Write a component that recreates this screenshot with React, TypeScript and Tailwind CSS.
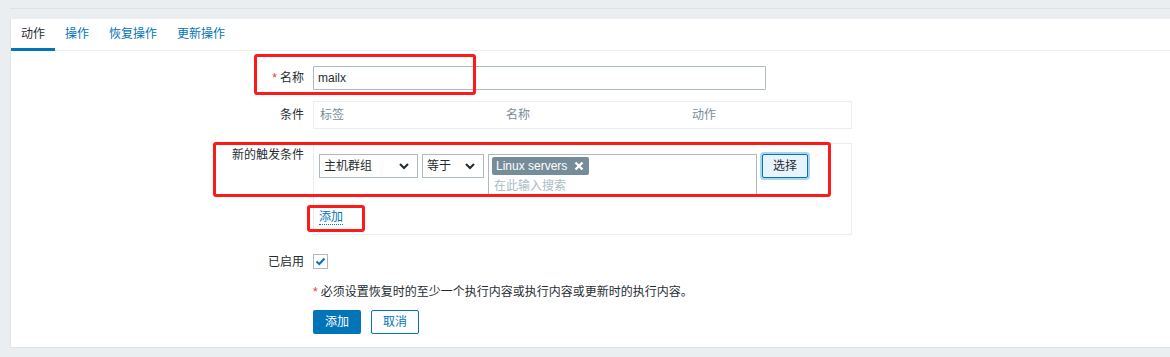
import React from 'react';

const font = "font-['Liberation_Sans','Noto_Sans_CJK_SC',sans-serif]";

/** Small dark chevron used in the native-looking selects. */
function Chevron() {
    return (
        <svg width="10" height="7" viewBox="0 0 10 7" className="shrink-0">
            <polyline points="1,1 5,5 9,1" fill="none" stroke="#1f2c33" strokeWidth="2" />
        </svg>
    );
}

function Select({ label, width }: { label: string; width: string }) {
    return (
        <div className={`${width} h-[24px] flex items-center justify-between pl-[4px] pr-[8px] border border-[#acbbc2] bg-white`}>
            <span>{label}</span>
            <Chevron />
        </div>
    );
}

const tabs = ['动作', '操作', '恢复操作', '更新操作'];

export default function App() {
    return (
        <div className={`relative w-[1170px] h-[357px] overflow-hidden bg-[#ebeef0] text-[12px] leading-[14px] text-[#1f2c33] ${font}`}>
            {/* strip above the panel */}
            <div className="ml-[10px] h-[9px] border-b border-[#dde2e5]" />

            <div className="mt-[10px] ml-[10px] h-[329px] bg-white border-l border-b border-[#dfe3e6]">
                {/* tabs */}
                <div className="flex border-b border-[#ebeef0]">
                    {tabs.map((t, i) => (
                        <div
                            key={t}
                            className={`h-[32px] -mb-px flex items-center px-[10px] border-b-[3px] ${
                                i === 0 ? 'border-[#0275b8] text-[#1f2c33]' : 'border-transparent text-[#0275b8]'
                            }`}
                        >
                            {t}
                        </div>
                    ))}
                </div>

                {/* name */}
                <div className="mt-[15px] flex items-center">
                    <div className="w-[293px] text-right">
                        <span className="text-[#e33734] mr-[3px]">*</span>名称
                    </div>
                    <div className="ml-[9px] w-[453px] h-[24px] flex items-center px-[4px] border border-[#acbbc2] rounded-[1px]">mailx</div>
                </div>

                {/* conditions */}
                <div className="mt-[11px] flex items-center">
                    <div className="w-[293px] text-right">条件</div>
                    <div className="ml-[9px] w-[539px] h-[28px] border border-[#ebeef0] grid grid-cols-[186px_186px_1fr] items-center text-[#768d99]">
                        <span className="pl-[6px]">标签</span>
                        <span className="pl-[6px]">名称</span>
                        <span className="pl-[6px]">动作</span>
                    </div>
                </div>

                {/* new condition */}
                <div className="mt-[14px] flex items-start">
                    <div className="w-[293px] text-right pt-[5px]">新的触发条件</div>
                    <div className="ml-[9px] w-[539px] h-[92px] border border-[#ebeef0] pl-[5px] pt-[10px]">
                        <div className="flex items-start gap-[4px]">
                            <Select label="主机群组" width="w-[99px]" />
                            <Select label="等于" width="w-[62px]" />
                            <div className="w-[269px] h-[43px] border border-[#acbbc2] flex flex-col pl-[3px] pt-[2px]">
                                <div className="flex">
                                    <span className="h-[18px] flex items-center gap-[7px] pl-[4px] pr-[5px] bg-[#768d99] text-white rounded-[2px]">
                                        Linux servers
                                        <svg width="10" height="10" viewBox="0 0 10 10">
                                            <path d="M1.5 1.5 L8.5 8.5 M8.5 1.5 L1.5 8.5" stroke="#fff" strokeWidth="2.4" />
                                        </svg>
                                    </span>
                                </div>
                                <span className="mt-[4px] pl-[2px] text-[#acbbc2]">在此输入搜索</span>
                            </div>
                            <div className="ml-[1px] w-[46px] h-[24px] flex items-center justify-center bg-[#e8f3fb] border border-[#0275b8] rounded-[2px] shadow-[0_0_0_2px_#a9d4f2]">
                                选择
                            </div>
                        </div>
                        <span className="inline-block mt-[13px] text-[#0275b8] border-b border-dotted border-[#0275b8]">添加</span>
                    </div>
                </div>

                {/* enabled */}
                <div className="mt-[19px] flex items-center">
                    <div className="w-[293px] text-right">已启用</div>
                    <div className="ml-[9px] w-[15px] h-[15px] border border-[#acbbc2] flex items-center justify-center">
                        <svg width="11" height="9" viewBox="0 0 11 9">
                            <polyline points="1.5,4.5 4.3,7 9.5,1.5" fill="none" stroke="#0275b8" strokeWidth="2" />
                        </svg>
                    </div>
                </div>

                <div className="mt-[16px] ml-[302px]">
                    <span className="text-[#e33734] mr-[3px]">*</span>必须设置恢复时的至少一个执行内容或执行内容或更新时的执行内容。
                </div>

                <div className="mt-[11px] ml-[302px] flex gap-[10px]">
                    <div className="w-[48px] h-[24px] flex items-center justify-center bg-[#0275b8] text-white rounded-[2px]">添加</div>
                    <div className="w-[48px] h-[24px] flex items-center justify-center border border-[#0275b8] text-[#0275b8] rounded-[2px]">取消</div>
                </div>
            </div>

            {/* red annotation boxes laid over the screenshot */}
            <div className="absolute left-[254px] top-[54px] w-[222px] h-[41px] border-[3px] border-[#ff1a1a] rounded-[3px]" />
            <div className="absolute left-[213px] top-[142px] w-[618px] h-[55px] border-[3px] border-[#ff1a1a] rounded-[3px]" />
            <div className="absolute left-[307px] top-[205px] w-[58px] h-[27px] border-[3px] border-[#ff1a1a] rounded-[3px]" />
        </div>
    );
}
